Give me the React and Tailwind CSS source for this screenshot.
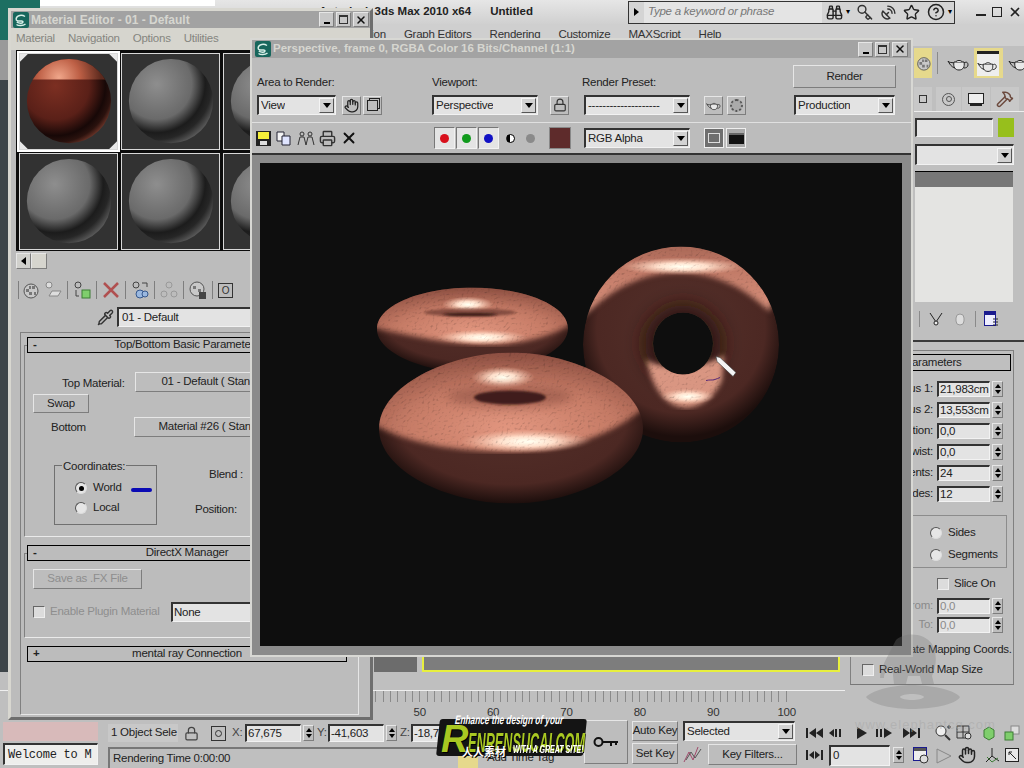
import { Binoculars, CircleHelp, Key, Lock, SatelliteDish, Star, Hand, Hammer, Pipette, Printer, X } from 'lucide-react'

// shared bevel styles
const raised = 'border border-t-[#e6e6e6] border-l-[#e6e6e6] border-b-[#7d7d7d] border-r-[#7d7d7d] bg-[#bdbdbd]'
const sunken = 'border-t-2 border-l-2 border-t-[#333] border-l-[#333] border-b border-r border-b-[#f2f2f2] border-r-[#f2f2f2] bg-[#e3e3e3]'

const ArrowBtn = () => (
  <span className="ml-auto mr-[1px] flex h-[15px] w-[15px] items-center justify-center border border-t-[#f4f4f4] border-l-[#f4f4f4] border-b-[#555] border-r-[#555] bg-[#d2d2d2]">
    <span className="h-0 w-0 border-x-[4px] border-t-[5px] border-x-transparent border-t-black" />
  </span>
)

const Dropdown = ({ label, className }) => (
  <div className={`flex h-[20px] items-center pl-[2px] text-[11.5px] text-[#222] ${sunken} ${className}`}>
    <span className="truncate">{label}</span>
    <ArrowBtn />
  </div>
)

const Spin = () => (
  <div className={`flex h-[16px] w-[11px] flex-col items-center justify-center gap-[2px] ${raised}`}>
    <span className="h-0 w-0 border-x-[3px] border-b-[4px] border-x-transparent border-b-black" />
    <span className="h-0 w-0 border-x-[3px] border-t-[4px] border-x-transparent border-t-black" />
  </div>
)

const SpinRow = ({ label, value, muted }) => (
  <div className="flex h-[16px] items-center">
    <span className={`w-[82px] whitespace-nowrap pr-[4px] text-right text-[11.5px] ${muted ? 'text-[#8a8a8a]' : 'text-[#222]'}`}>{label}</span>
    <span className={`flex h-[16px] w-[53px] items-center pl-[1px] text-[11.5px] ${sunken} ${muted ? 'text-[#8a8a8a]' : 'text-[#222]'}`}>{value}</span>
    <span className="ml-[2px]"><Spin /></span>
  </div>
)

const Radio = ({ on }) => (
  <span className="flex h-[12px] w-[12px] items-center justify-center rounded-full border border-t-[#555] border-l-[#555] border-b-[#ddd] border-r-[#ddd] bg-[#e6e6e6]">
    {on && <span className="h-[5px] w-[5px] rounded-full bg-black" />}
  </span>
)

const Check = () => (
  <span className="h-[12px] w-[12px] border border-t-[#666] border-l-[#666] border-b-[#eee] border-r-[#eee] bg-[#dcdcdc]" />
)

const RolloutHead = ({ sign, title, className = '' }) => (
  <div className={`relative flex h-[16px] items-center justify-center border border-black bg-[#bcbcbc] text-[11.5px] text-[#222] ${className}`}>
    <span className="absolute left-[5px] font-bold">{sign}</span>
    {title}
  </div>
)

const MaxLogo = () => (
  <svg width="16" height="16" viewBox="0 0 16 16">
    <rect width="16" height="16" rx="2" fill="#17665c" />
    <path d="M12 4.5C9 2.5 4 3 3.2 6.5 2.6 9.5 6 9 8.5 9c2 .1 2 2-.5 2.2-1.6.1-3-.3-4.2-1M12.5 12C10 14 5.5 14 3.5 12.5" fill="none" stroke="#d8efe8" strokeWidth="1.5" />
  </svg>
)

const WinButtons = ({ className }) => (
  <div className={`flex gap-[2px] ${className}`}>
    <div className={`flex h-[15px] w-[15px] items-end justify-center pb-[2px] ${raised} bg-[#c8c8c8]`}><span className="h-[2px] w-[6px] bg-black" /></div>
    <div className={`flex h-[15px] w-[15px] items-center justify-center ${raised} bg-[#c8c8c8]`}><span className="h-[9px] w-[9px] border border-t-2 border-[#333]" /></div>
    <div className={`flex h-[15px] w-[16px] items-center justify-center ${raised} bg-[#c8c8c8]`}><X size={12} strokeWidth={3} color="#111" /></div>
  </div>
)

const CheckerBall = ({ size = 18 }) => (
  <svg width={size} height={size} viewBox="0 0 18 18">
    <circle cx="10" cy="10" r="7" fill="#c8c8c8" stroke="#555" />
    <path d="M5 8h3v3H5zM11 5h3v3h-3zM8 11h3v3H8zM13 11h2v3h-2zM8 5h2v3H8z" fill="#777" />
  </svg>
)

const Teapot = ({ size = 24, stroke = '#222' }) => (
  <svg width={size} height={size} viewBox="0 0 24 24" fill="#e8e8e8" stroke={stroke} strokeWidth="1">
    <path d="M7 11h10c1 5-1 8-5 8s-6-3-5-8z" />
    <path d="M7 12c-3-1-5 0-6-2 1 2 3 6 7 7M17 12c3-2 4 0 4 2s-2 3-4 3" fill="none" />
    <path d="M9 11c0-2 6-2 6 0" />
  </svg>
)

const ToolSep = () => <span className="mx-[5px] h-[18px] w-[1px] bg-[#7e7e7e]" />

const Sphere = ({ selected, id }) => {
  if (selected) {
    return (
      <svg viewBox="0 0 99 97" className="block h-full w-full">
        <defs>
          <radialGradient id="redLow" cx="34%" cy="32%" r="80%">
            <stop offset="0" stopColor="#7c2f22" />
            <stop offset=".5" stopColor="#5a2018" />
            <stop offset=".74" stopColor="#170807" />
            <stop offset=".84" stopColor="#2a120e" />
            <stop offset=".97" stopColor="#8a4535" />
          </radialGradient>
          <radialGradient id="redTop" cx="38%" cy="22%" r="50%">
            <stop offset="0" stopColor="#f0a68a" />
            <stop offset=".5" stopColor="#bd5f45" />
            <stop offset="1" stopColor="#5c2a1e" />
          </radialGradient>
          <clipPath id="capClip"><rect x="0" y="0" width="99" height="26" /></clipPath>
        </defs>
        <rect width="99" height="97" fill="#323232" />
        <circle cx="50" cy="48" r="43" fill="url(#redLow)" />
        <circle cx="50" cy="48" r="43" fill="url(#redTop)" clipPath="url(#capClip)" />
        <path d="M0 0h8L0 8zM99 0v8L91 0zM0 97v-8l8 8zM99 97h-8l8-8z" fill="#e8e8e8" />
      </svg>
    )
  }
  return (
    <svg viewBox="0 0 99 97" className="block h-full w-full">
      <defs>
        <radialGradient id={id} cx="33%" cy="30%" r="80%">
          <stop offset="0" stopColor="#8e8e8e" />
          <stop offset=".52" stopColor="#6a6a6a" />
          <stop offset=".72" stopColor="#1c1c1c" />
          <stop offset=".82" stopColor="#262626" />
          <stop offset=".96" stopColor="#5e5e5e" />
        </radialGradient>
      </defs>
      <rect width="99" height="97" fill="#323232" />
      <circle cx="50" cy="48" r="43" fill={`url(#${id})`} />
    </svg>
  )
}

const MaterialEditor = () => (
  <section className="absolute left-[8px] top-[8px] flex h-[712px] w-[365px] flex-col border-[3px] border-[#d8d7d0] border-b-[#6e6e6e] border-r-[#6e6e6e] bg-[#bcbcbc]">
    <div className="flex h-[17px] items-center bg-[#a2a2a2] pl-[2px]">
      <MaxLogo />
      <span className="ml-[2px] text-[12px] font-bold tracking-normal text-[#d6d6d0]">Material Editor - 01 - Default</span>
      <WinButtons className="ml-auto mr-[1px]" />
    </div>
    <div className="flex h-[22px] items-center gap-[13px] bg-[#d6d5ce] pl-[5px] text-[11.5px] text-[#85857f]">
      <span>Material</span><span>Navigation</span><span>Options</span><span>Utilities</span>
    </div>
    <div className="ml-[5px] grid h-[201px] w-[340px] grid-cols-[99px_99px_99px] gap-[3px] bg-[#0c0c0c] p-[3px]">
      <div className="border border-[#d8d8d8] outline-2 outline-white"><Sphere selected /></div>
      <div className="border border-[#d8d8d8]"><Sphere id="s2" /></div>
      <div className="border border-[#d8d8d8]"><Sphere id="s3" /></div>
      <div className="border border-[#d8d8d8]"><Sphere id="s4" /></div>
      <div className="border border-[#d8d8d8]"><Sphere id="s5" /></div>
      <div className="border border-[#d8d8d8]"><Sphere id="s6" /></div>
    </div>
    <div className="ml-[5px] mt-[2px] flex h-[16px]">
      <div className={`flex w-[15px] items-center justify-center ${raised} bg-[#d0d0cc]`}><span className="h-0 w-0 border-y-[4px] border-r-[5px] border-y-transparent border-r-black" /></div>
      <div className={`w-[16px] ${raised} bg-[#d6d5ce]`} />
    </div>
    <div className="ml-[7px] mt-[11px] flex h-[20px] items-center">
      <span className="mr-[2px] h-[18px] w-[1px] bg-[#7e7e7e]" />
      <CheckerBall />
      <svg width="18" height="18" viewBox="0 0 18 18" className="ml-[5px]" fill="#ddd" stroke="#888"><circle cx="5" cy="4" r="3" /><path d="M5 15l3-5h9l-3 5z" /></svg>
      <ToolSep />
      <svg width="18" height="18" viewBox="0 0 18 18" stroke="#444" fill="none"><circle cx="5" cy="4" r="3" /><path d="M3 9v6h3" /><rect x="9" y="9" width="8" height="8" fill="#7fce6c" stroke="#3d7d35" /></svg>
      <ToolSep />
      <svg width="18" height="18" viewBox="0 0 18 18" stroke="#b05050" strokeWidth="2.5"><path d="M2 2l14 14M16 2L2 16" /></svg>
      <ToolSep />
      <svg width="18" height="18" viewBox="0 0 18 18" stroke="#444" fill="none"><circle cx="5" cy="4" r="3" /><path d="M11 2h5v4" /><circle cx="9" cy="13" r="4" fill="#9ab8e0" stroke="#35588d" /><circle cx="14" cy="13" r="3" fill="#9ab8e0" stroke="#35588d" /></svg>
      <ToolSep />
      <svg width="18" height="18" viewBox="0 0 18 18" stroke="#999" fill="none"><circle cx="9" cy="4" r="3" /><circle cx="4" cy="13" r="3" /><circle cx="14" cy="13" r="3" /></svg>
      <ToolSep />
      <svg width="18" height="18" viewBox="0 0 18 18"><circle cx="8" cy="8" r="7" fill="#c8c8c8" stroke="#555" /><path d="M4 5h3v3H4zM9 8h3v3H9z" fill="#777" /><rect x="10" y="11" width="7" height="7" fill="#444" /></svg>
      <ToolSep />
      <span className="flex h-[15px] w-[15px] items-center justify-center border border-[#333] text-[10px] text-[#333]">O</span>
    </div>
    <div className="mt-[7px] flex h-[20px] items-center">
      <Pipette size={17} color="#333" className="ml-[86px]" />
      <div className={`ml-[3px] flex h-[20px] w-[200px] items-center pl-[3px] text-[11.5px] text-[#222] ${sunken}`}>01 - Default</div>
    </div>
    {/* material parameter rollouts */}
    <div className="relative ml-[9px] mt-[5px] h-[383px] w-[339px] border border-[#808080] border-b-[#e6e6e6] border-r-[#e6e6e6] pl-[3px]">
      <div className="relative mt-[4px] h-[200px] w-[324px]">
        <div className="absolute bottom-0 left-0 top-[8px] w-full border border-[#808080] border-b-[#eaeaea]" />
        <RolloutHead sign="-" title="Top/Bottom Basic Parameters" className="relative ml-[3px] w-[320px]" />
        <div className="relative mt-[20px] flex h-[18px] items-center text-[11.5px] text-[#222]">
          <span className="ml-[38px] mt-[3px] w-[73px]">Top Material:</span>
          <div className={`w-[170px] text-center ${raised}`}>01 - Default  ( Standard )</div>
        </div>
        <div className={`relative ml-[9px] mt-[3px] flex h-[19px] w-[56px] items-center justify-center text-[11.5px] text-[#222] ${raised}`}>Swap</div>
        <div className="relative mt-[5px] flex h-[18px] items-center text-[11.5px] text-[#222]">
          <span className="ml-[27px] mt-[2px] w-[83px]">Bottom</span>
          <div className={`w-[170px] text-center ${raised}`}>Material #26  ( Standard )</div>
        </div>
        <div className="relative mt-[24px] flex text-[11.5px] text-[#222]">
          <div className="relative ml-[30px] mt-[5px] h-[60px] w-[103px] border border-[#707070] pl-[20px] pt-[12px]">
            <span className="absolute left-[7px] top-[-8px] bg-[#bcbcbc] px-[1px]">Coordinates:</span>
            <div className="flex h-[20px] items-center gap-[6px]"><Radio on /><span>World</span><span className="ml-[3px] mt-[4px] h-[4px] w-[21px] rounded-full bg-[#0a0ab4]" /></div>
            <div className="flex h-[20px] items-center gap-[6px]"><Radio /><span>Local</span></div>
          </div>
          <div className="ml-[38px] flex flex-col">
            <span className="ml-[14px] mt-[6px]">Blend :</span>
            <span className="mt-[18px]">Position:</span>
          </div>
        </div>
      </div>
      <div className="relative mt-[8px] h-[93px] w-[324px]">
        <div className="absolute bottom-0 left-0 top-[8px] w-full border border-[#808080] border-b-[#eaeaea]" />
        <RolloutHead sign="-" title="DirectX Manager" className="relative ml-[3px] w-[320px]" />
        <div className={`relative ml-[9px] mt-[8px] flex h-[20px] w-[109px] items-center justify-center text-[11.5px] text-[#8e8e8e] ${raised}`}>Save as .FX File</div>
        <div className="relative mt-[13px] flex h-[20px] items-center text-[11.5px] text-[#8e8e8e]">
          <span className="ml-[9px] flex"><Check /></span>
          <span className="ml-[5px] w-[121px]">Enable Plugin Material</span>
          <span className={`flex h-[20px] w-[120px] items-center pl-[1px] text-[#222] ${sunken}`}>None</span>
        </div>
      </div>
      <div className="relative mt-[8px] h-[16px] w-[324px]">
        <RolloutHead sign="+" title="mental ray Connection" className="ml-[3px] w-[320px]" />
      </div>
    </div>
  </section>
)

// bump-mapped doughnuts of the rendered frame, in screen coordinates
const Doughnuts = () => (
  <svg viewBox="260 163 642 482" className="block h-full w-full">
    <defs>
      <filter id="bump" x="0" y="0" width="100%" height="100%" colorInterpolationFilters="sRGB">
        <feTurbulence type="fractalNoise" baseFrequency="0.38" numOctaves="2" seed="4" result="n" />
        <feDiffuseLighting in="n" surfaceScale="0.7" diffuseConstant="1.14" lightingColor="#fff" result="l0">
          <feDistantLight azimuth="235" elevation="64" />
        </feDiffuseLighting>
        <feGaussianBlur in="l0" stdDeviation="0.5" result="l" />
        <feComposite in="SourceGraphic" in2="l" operator="arithmetic" k1="1.05" k2="0" k3="0" k4="0" result="m" />
        <feComposite in="m" in2="SourceAlpha" operator="in" />
      </filter>
      <filter id="b2" x="-20%" y="-20%" width="140%" height="140%"><feGaussianBlur stdDeviation="3" /></filter>
      <filter id="b1" x="-20%" y="-100%" width="140%" height="300%"><feGaussianBlur stdDeviation="1.2" /></filter>
      <filter id="b4" x="-50%" y="-100%" width="200%" height="300%"><feGaussianBlur stdDeviation="5" /></filter>
      <filter id="b8" x="-60%" y="-60%" width="220%" height="220%"><feGaussianBlur stdDeviation="10" /></filter>
      <radialGradient id="dark" cx="50%" cy="42%" r="55%">
        <stop offset="0" stopColor="#54302a" />
        <stop offset=".78" stopColor="#4c2823" />
        <stop offset="1" stopColor="#1c0e0c" />
      </radialGradient>
      <radialGradient id="litA" cx="50%" cy="78%" r="68%">
        <stop offset="0" stopColor="#d8907a" />
        <stop offset=".55" stopColor="#bc7561" />
        <stop offset="1" stopColor="#83493c" />
      </radialGradient>
      <linearGradient id="litC" x1="0" y1="1" x2="0" y2="0">
        <stop offset="0" stopColor="#d4917c" />
        <stop offset=".5" stopColor="#ba7664" />
        <stop offset="1" stopColor="#8c5345" />
      </linearGradient>
      <radialGradient id="spec">
        <stop offset="0" stopColor="#fff8ea" />
        <stop offset=".4" stopColor="#fae0cd" stopOpacity=".9" />
        <stop offset="1" stopColor="#eeb9a2" stopOpacity="0" />
      </radialGradient>
      <clipPath id="bodyA"><path d="M377 328C378 303 425 287 472 287S568 303 568 328C568 352 520 372 472 372S376 352 377 328Z" /></clipPath>
      <clipPath id="bodyB"><path d="M379 428C379 385 450 352 511 352S643 385 643 428C643 470 575 503 511 503S379 470 379 428Z" /></clipPath>
      <clipPath id="bodyC"><path fillRule="evenodd" clipRule="evenodd" d="M583 344a98 98 0 1 0 196 0a98 98 0 1 0 -196 0ZM653 343a30 31 0 1 1 60 0a30 31 0 1 1 -60 0Z" /></clipPath>
    </defs>

    {/* right doughnut */}
    <g clipPath="url(#bodyC)">
      <circle cx="681" cy="344" r="98" fill="url(#dark)" />
      <circle cx="683" cy="343" r="38" fill="#2b1411" filter="url(#b8)" />
      <g filter="url(#bump)">
        <g filter="url(#b2)">
          <path d="M575 325L593 310C620 285 650 274 677 274C710 274 740 285 770 314L795 240L575 220Z" fill="url(#litC)" />
          <path d="M644 356C660 368 700 368 726 352L724 380C714 402 698 409 685 409C665 408 650 390 644 356Z" fill="#cf8f7b" />
        </g>
        <ellipse cx="682" cy="266" rx="62" ry="9" fill="url(#spec)" />
        <ellipse cx="688" cy="396" rx="28" ry="8" fill="url(#spec)" />
      </g>
    </g>

    {/* back left doughnut */}
    <g clipPath="url(#bodyA)">
      <rect x="370" y="280" width="205" height="95" fill="url(#dark)" />
      <g filter="url(#bump)">
        <path filter="url(#b2)" d="M370 328C410 338 450 346 493 346C525 345 550 338 575 324V280H370Z" fill="url(#litA)" />
        <ellipse cx="468" cy="304" rx="26" ry="8" fill="url(#spec)" />
        <ellipse cx="482" cy="337" rx="46" ry="8" fill="url(#spec)" />
      </g>
      <ellipse cx="470" cy="312" rx="46" ry="4" fill="#6a3a30" opacity=".7" filter="url(#b1)" />
      <ellipse cx="470" cy="314" rx="28" ry="1.6" fill="#3a1c18" filter="url(#b1)" />
    </g>

    {/* front doughnut */}
    <g clipPath="url(#bodyB)">
      <rect x="375" y="348" width="272" height="160" fill="url(#dark)" />
      <g filter="url(#bump)">
        <path filter="url(#b2)" d="M370 424C405 444 450 453 510 453C560 453 610 440 650 405V340H370Z" fill="url(#litA)" />
        <ellipse cx="503" cy="377" rx="32" ry="11" fill="url(#spec)" />
        <ellipse cx="527" cy="441" rx="66" ry="12" fill="url(#spec)" />
      </g>
      <ellipse cx="510" cy="396" rx="62" ry="11" fill="#8a5042" opacity=".55" filter="url(#b4)" />
      <ellipse cx="510" cy="397" rx="36" ry="7" fill="#3f1f1b" filter="url(#b1)" />
    </g>

    {/* pen cursor and scribble */}
    <path d="M706 380c4-1 6 0 9-1 2-1 3-1 5-2" fill="none" stroke="#5a2a78" />
    <path d="M716 356l4 1 16 15-3 4-16-15z" fill="#f4f4f4" stroke="#333" strokeWidth=".6" />
  </svg>
)

const RenderWindow = () => (
  <section className="absolute left-[250px] top-[38px] flex h-[619px] w-[663px] flex-col border-2 border-[#d8d8d4] bg-[#bcbcbc]">
    <div className="flex h-[18px] items-center bg-[#a3a3a3] pl-[3px]">
      <MaxLogo />
      <span className="ml-[2px] text-[11.5px] font-bold tracking-normal text-[#d6d6d0]">Perspective, frame 0, RGBA Color 16 Bits/Channel (1:1)</span>
      <WinButtons className="ml-auto mr-[3px]" />
    </div>
    <div className="flex h-[65px] border-b border-[#e0e0e0] pl-[5px] text-[11.5px] text-[#222]">
      <div className="w-[175px] pt-[16px]">
        <div className="h-[21px]">Area to Render:</div>
        <div className="flex items-center">
          <Dropdown label="View" className="w-[79px]" />
          <span className={`ml-[6px] flex h-[19px] w-[19px] items-center justify-center ${raised}`}><Hand size={15} color="#222" /></span>
          <span className={`ml-[2px] flex h-[19px] w-[19px] items-center justify-center ${raised}`}><span className="h-[11px] w-[11px] border border-[#222] shadow-[2px_-2px_0_-1px_#bdbdbd,2px_-2px_0_0_#222]" /></span>
        </div>
      </div>
      <div className="w-[150px] pt-[16px]">
        <div className="h-[21px]">Viewport:</div>
        <div className="flex items-center">
          <Dropdown label="Perspective" className="w-[106px]" />
          <span className={`ml-[12px] flex h-[19px] w-[19px] items-center justify-center ${raised}`}><Lock size={14} color="#333" /></span>
        </div>
      </div>
      <div className="w-[211px] pt-[16px]">
        <div className="h-[21px]">Render Preset:</div>
        <div className="flex items-center">
          <Dropdown label="--------------------" className="ml-[2px] w-[106px]" />
          <span className={`ml-[14px] flex h-[19px] w-[19px] items-center justify-center ${raised}`}><Teapot size={16} /></span>
          <span className={`ml-[4px] flex h-[19px] w-[19px] items-center justify-center ${raised}`}><span className="h-[13px] w-[13px] rounded-full border-2 border-dotted border-[#555] bg-[#aaa]" /></span>
        </div>
      </div>
      <div className="w-[104px] pt-[7px]">
        <div className={`flex h-[23px] w-[103px] items-center justify-center ${raised}`}>Render</div>
        <Dropdown label="Production" className="ml-[1px] mt-[7px] w-[101px]" />
      </div>
    </div>
    <div className="flex h-[32px] items-center border-b-2 border-[#333] pl-[4px]">
      <svg width="15" height="15" viewBox="0 0 15 15"><rect width="15" height="15" fill="#222" /><rect x="2" y="1" width="11" height="7" fill="#f4ee3a" /><rect x="4" y="10" width="7" height="4" fill="#ddd" /></svg>
      <svg width="16" height="15" viewBox="0 0 16 15" className="ml-[5px]" fill="#f4f4f4" stroke="#223"><path d="M1 1h7v9H1z" /><path d="M6 5h8v9H6z" fill="#dfe4ff" /></svg>
      <svg width="18" height="15" viewBox="0 0 18 15" className="ml-[5px]" fill="none" stroke="#333"><circle cx="5" cy="3" r="2" /><circle cx="13" cy="3" r="2" /><path d="M1 14l2-8h4l2 8M9 14l2-8h4l2 8" /></svg>
      <Printer size={17} color="#333" className="ml-[4px]" />
      <X size={18} strokeWidth={2.5} color="#111" className="ml-[4px]" />
      <div className="ml-[76px] flex gap-[1px]">
        {['#d8101c', '#109a1c', '#1010c4'].map(c => (
          <div key={c} className="flex h-[22px] w-[21px] items-center justify-center border border-t-[#777] border-l-[#777] border-b-[#f2f2f2] border-r-[#f2f2f2] bg-[#e4e4e4]">
            <span className="h-[9px] w-[9px] rounded-full" style={{ backgroundColor: c }} />
          </div>
        ))}
      </div>
      <span className="ml-[7px] h-[9px] w-[9px] rounded-full border border-black bg-[linear-gradient(90deg,#000_50%,#fff_50%)]" />
      <span className="ml-[11px] h-[9px] w-[9px] rounded-full bg-[#8a8a8a]" />
      <span className="ml-[14px] h-[22px] w-[22px] border border-[#888] bg-[#5e2b2b]" />
      <Dropdown label="RGB Alpha" className="ml-[13px] w-[106px]" />
      <span className="ml-[14px] flex h-[20px] w-[20px] items-center justify-center border border-[#eee] bg-[#6e6e6e]"><span className="h-[10px] w-[12px] border border-[#ddd]" /></span>
      <span className="ml-[2px] flex h-[20px] w-[20px] items-center justify-center border border-[#eee] bg-[#aaa]"><span className="h-[11px] w-[15px] border-t-2 border-[#666] bg-[#111]" /></span>
    </div>
    <div className="min-h-0 flex-1 bg-[#8b8b8b] pb-[9px] pl-[8px] pr-[9px] pt-[8px]">
      <div className="h-full w-full bg-[#0e0e0e]"><Doughnuts /></div>
    </div>
  </section>
)

const CommandPanel = () => (
  <aside className="w-[179px] shrink-0 bg-[#bfbfbf] text-[11.5px] text-[#222]">
    <div className="ml-[69px] flex h-[34px] items-center">
      <span className="flex h-[30px] w-[18px] items-center justify-center bg-[#e6d98c]"><CheckerBall size={16} /></span>
      <span className="mx-[5px] h-[22px] w-[1px] bg-[#8a8a8a]" />
      <span className="ml-[4px]"><Teapot size={24} /></span>
      <span className="ml-[3px] flex h-[30px] w-[30px] items-center justify-center bg-[#e6d98c]"><span className="border-t-[3px] border-[#222] bg-[#eee]"><Teapot size={22} /></span></span>
      <span className="ml-[5px] w-[16px] overflow-hidden"><Teapot size={24} /></span>
    </div>
    <div className="ml-[69px] mt-[7px] flex h-[25px] items-center gap-[1px] border-b border-[#eee]">
      <span className="flex h-[24px] w-[18px] items-center justify-center bg-[#c8c8c8]"><span className="h-[8px] w-[8px] border border-[#333]" /></span>
      <span className="ml-[3px] flex h-[24px] w-[25px] items-center justify-center bg-[#c8c8c8]"><span className="flex h-[13px] w-[13px] items-center justify-center rounded-full border border-[#555]"><span className="h-[6px] w-[6px] rounded-full border border-[#555]" /></span></span>
      <span className="flex h-[24px] w-[28px] flex-col items-center justify-center bg-[#c8c8c8]"><span className="h-[11px] w-[16px] border border-[#222] bg-[#eee]" /><span className="h-[2px] w-[12px] bg-[#222]" /></span>
      <span className="flex h-[24px] w-[28px] items-center justify-center bg-[#c8c8c8]"><Hammer size={18} color="#6c4a3e" /></span>
    </div>
    <div className="ml-[70px] mt-[6px] flex">
      <span className={`h-[19px] w-[78px] ${sunken}`} />
      <span className="ml-[5px] h-[19px] w-[16px] bg-[#97bf1c]" />
    </div>
    <Dropdown label="" className="ml-[70px] mt-[7px] h-[21px] w-[99px]" />
    <div className="ml-[70px] mt-[6px] h-[131px] w-[98px] bg-[#e4e4e2]"><div className="h-[16px] border-t border-black bg-[#777]" /></div>
    <div className="ml-[74px] mt-[8px] flex h-[18px] items-center">
      <span className="h-[16px] w-[1px] bg-[#8a8a8a]" />
      <svg width="16" height="16" viewBox="0 0 16 16" className="ml-[9px]" fill="none" stroke="#222"><path d="M1 2l6 9 6-9" /><circle cx="7" cy="12" r="2" fill="#eee" /></svg>
      <svg width="12" height="16" viewBox="0 0 12 16" className="ml-[9px]" fill="#ddd" stroke="#999"><rect x="2" y="3" width="8" height="11" rx="4" /></svg>
      <span className="ml-[9px] h-[16px] w-[1px] bg-[#8a8a8a]" />
      <svg width="16" height="16" viewBox="0 0 16 16" className="ml-[8px]"><rect x=".5" y=".5" width="11" height="14" fill="#eef" stroke="#1a1a8e" /><rect x="1" y="1" width="11" height="3" fill="#1a1a8e" /><path d="M9 8h6M9 11h6M9 14h6" stroke="#222" strokeDasharray="2 1" /></svg>
    </div>
    <div className="mt-[12px] h-[2px] w-full bg-[#3a3a3a]" />
    <div className="ml-[5px] mt-[8px] h-[335px] w-[164px] border border-[#808080] border-b-[#777] pl-[4px]">
      <div className="relative mt-[3px] flex h-[17px] w-[156px] items-center justify-center border border-black">Parameters</div>
      <div className="mt-[10px] flex flex-col gap-[5px]">
        <SpinRow label="Radius 1:" value="21,983cm" />
        <SpinRow label="Radius 2:" value="13,553cm" />
        <SpinRow label="Rotation:" value="0,0" />
        <SpinRow label="Twist:" value="0,0" />
        <SpinRow label="Segments:" value="24" />
        <SpinRow label="Sides:" value="12" />
      </div>
      <div className="ml-[2px] mt-[13px] h-[53px] w-[150px] border border-[#8c8c8c] pl-[72px] pt-[10px]">
        <div className="flex h-[14px] items-center gap-[6px]"><Radio /><span>Sides</span></div>
        <div className="mt-[8px] flex h-[14px] items-center gap-[6px]"><Radio /><span>Segments</span></div>
      </div>
      <div className="ml-[82px] mt-[9px] flex h-[14px] items-center gap-[5px]"><Check /><span>Slice On</span></div>
      <div className="mt-[7px] flex flex-col gap-[3px]">
        <SpinRow label="Slice From:" value="0,0" muted />
        <SpinRow label="To:" value="0,0" muted />
      </div>
    </div>
  </aside>
)

const MappingChecks = () => (
  <div className="absolute left-[862px] top-[642px] text-[11.5px] text-[#222]">
    <div className="flex h-[16px] items-center gap-[5px]"><Check /><span>Generate Mapping Coords.</span></div>
    <div className="mt-[4px] flex h-[16px] items-center gap-[5px]"><Check /><span>Real-World Map Size</span></div>
  </div>
)

const Transport = ({ d, className = '' }) => (
  <svg width="18" height="14" viewBox="0 0 18 14" className={className} fill="#222"><path d={d} /></svg>
)

const StatusBar = () => (
  <footer className="flex h-[48px] bg-[#bfbfbf] text-[11.5px] text-[#222]">
    <div className="w-[105px] shrink-0 pl-[3px] pt-[2px]">
      <div className="h-[19px] w-[95px] bg-[#d8baba]" />
      <div className={`mt-[2px] flex h-[22px] w-[95px] items-center whitespace-nowrap pl-[3px] font-['Liberation_Mono',monospace] text-[12px] ${sunken} bg-[#eeeeec]`}>Welcome to M</div>
    </div>
    <div className="w-[479px] shrink-0 pt-[4px]">
      <div className="flex h-[18px] items-center">
        <span className="ml-[3px] flex h-[18px] w-[70px] items-center whitespace-nowrap bg-[#c8c8c8] pl-[3px]">1 Object Sele</span>
        <Lock size={15} color="#444" className="ml-[6px]" />
        <span className="ml-[12px] flex h-[15px] w-[15px] items-center justify-center border border-[#333]"><span className="h-[7px] w-[7px] rounded-full border border-[#333]" /></span>
        <span className="ml-[6px] w-[13px] text-[#444]">X:</span>
        <span className={`flex h-[18px] w-[56px] items-center pl-[1px] ${sunken}`}>67,675</span>
        <span className="ml-[2px]"><Spin /></span>
        <span className="ml-[3px] w-[11px] text-[#444]">Y:</span>
        <span className={`flex h-[18px] w-[56px] items-center pl-[1px] ${sunken}`}>-41,603</span>
        <span className="ml-[2px]"><Spin /></span>
        <span className="ml-[3px] w-[11px] text-[#444]">Z:</span>
        <span className={`flex h-[18px] w-[56px] items-center pl-[1px] ${sunken}`}>-18,72</span>
      </div>
      <div className="mt-[5px] flex h-[21px] items-center">
        <span className="ml-[3px] flex h-[21px] w-[350px] items-center border-l-2 border-t-2 border-[#777] pl-[3px]">Rendering Time  0:00:00</span>
        <span className="h-[21px] w-[20px] bg-[#e6d98c]" />
        <span className="ml-[9px]">Add Time Tag</span>
      </div>
    </div>
    <div className={`flex h-[44px] w-[44px] shrink-0 items-center justify-center ${raised}`}>
      <svg width="26" height="12" viewBox="0 0 26 12" fill="none" stroke="#111" strokeWidth="2"><circle cx="5.5" cy="6" r="4" /><path d="M10 6h15M18 6v4M23 6v3" /></svg>
    </div>
    <div className="ml-[4px] flex w-[46px] shrink-0 flex-col gap-[2px] pt-[1px]">
      <div className={`flex h-[20px] items-center justify-center whitespace-nowrap ${raised}`}>Auto Key</div>
      <div className={`flex h-[21px] items-center justify-center whitespace-nowrap ${raised}`}>Set Key</div>
    </div>
    <div className="ml-[5px] flex w-[114px] shrink-0 flex-col gap-[3px] pt-[1px]">
      <Dropdown label="Selected" className="w-[112px]" />
      <div className="flex h-[21px] items-center">
        <svg width="20" height="18" viewBox="0 0 20 18" fill="none" stroke="#a04a6a"><path d="M1 16l5-10 4 8 5-13" /><path d="M3 14l5-8 4 6 6-9" stroke="#555" /></svg>
        <div className={`ml-[5px] flex h-[21px] w-[89px] items-center justify-center ${raised}`}>Key Filters...</div>
      </div>
    </div>
    <div className="ml-[9px] flex-1">
      <div className="flex h-[24px] items-center pt-[1px]">
        <Transport d="M0 2h2v10H0zM3 7l7-5v10zM10 7l7-5v10z" />
        <Transport d="M0 7l5-4v8zM6 3h2v8H6zM10 3h2v8h-2z" className="ml-[5px]" />
        <Transport d="M4 1l10 6-10 6z" className="ml-[6px]" />
        <Transport d="M0 3h2v8H0zM4 3h2v8H4zM8 2l8 5-8 5z" className="ml-[5px]" />
        <Transport d="M0 2l7 5-7 5zM7 2l7 5-7 5zM15 2h2v10h-2z" className="ml-[9px]" />
        <span className="ml-[13px] flex"><svg width="18" height="16" viewBox="0 0 18 16" fill="#eee" stroke="#333"><circle cx="7" cy="6" r="5" /><path d="M11 10l5 5" strokeWidth="2" /><path d="M13 2h4M15 0v4" /></svg></span>
        <span className="ml-[4px] flex"><svg width="18" height="16" viewBox="0 0 18 16" fill="none" stroke="#333"><path d="M1 1h12v12H1zM1 7h12M7 1v12" /><circle cx="12" cy="11" r="3" fill="#ddd" /></svg></span>
        <span className="ml-[7px] flex"><svg width="16" height="16" viewBox="0 0 16 16"><path d="M3 5l5-3 5 3v7l-5 3-5-3z" fill="#7fce6c" stroke="#3d7d35" /></svg></span>
        <span className="ml-[6px] flex"><svg width="18" height="16" viewBox="0 0 18 16"><rect x="8" y="1" width="8" height="8" fill="#ddd" stroke="#888" /><rect x="2" y="7" width="8" height="8" fill="#7fce6c" stroke="#3d7d35" /></svg></span>
      </div>
      <div className="flex h-[22px] items-center">
        <Transport d="M0 2h2v10H0zM3 7l5-4v8zM14 7l-5-4v8zM15 2h2v10h-2z" />
        <span className={`ml-[5px] flex h-[21px] w-[61px] items-center pl-[2px] ${sunken}`}>0</span>
        <span className="ml-[3px]"><Spin /></span>
        <span className="ml-[9px] flex"><svg width="17" height="17" viewBox="0 0 17 17"><rect x=".5" y=".5" width="13" height="13" fill="#eee" stroke="#1a1a8e" /><rect x="1" y="1" width="12" height="3" fill="#555" /><circle cx="11" cy="12" r="4" fill="#ddd" stroke="#333" /></svg></span>
        <span className="ml-[6px] flex"><svg width="16" height="17" viewBox="0 0 16 17" fill="none" stroke="#888"><path d="M1 2l14 7-14 7z" /></svg></span>
        <Hand size={18} color="#222" className="ml-[6px]" />
        <span className="ml-[8px] flex"><svg width="17" height="17" viewBox="0 0 17 17" fill="none" stroke="#222"><path d="M8 9V1M8 9l-6 6M8 9l7 5" /><path d="M3 10l5 5 6-4" stroke="#3d7d35" /></svg></span>
        <span className="ml-[4px] flex"><svg width="15" height="15" viewBox="0 0 15 15" fill="none" stroke="#222"><rect x=".5" y=".5" width="13" height="13" fill="#e8e8e8" /><path d="M4 4l7 7M4 4h3M4 4v3" /></svg></span>
      </div>
    </div>
  </footer>
)

// frame ruler under the viewports, 100 frames from screen x 53 to 787
const frameLabels = [0, 10, 20, 30, 40, 50, 60, 70, 80, 90, 100]
const ticks = Array.from({ length: 101 }, (_, i) => i)

const Timeline = () => (
  <div className="h-[48px] bg-[#bfbfbf] pt-[18px] text-[11.5px] text-[#333]">
    <div className="flex h-[12px] border-t border-[#efefef]">
      <div className="ml-[53px] flex">
        {ticks.map(t => <span key={t} className="h-[11px] w-[7.34px] shrink-0 border-l border-[#8a8a8a]" />)}
      </div>
    </div>
    <div className="ml-[16px] mt-[2px] flex">
      {frameLabels.map(f => <span key={f} className="w-[73.4px] shrink-0 text-center">{f}</span>)}
    </div>
  </div>
)

const Watermark = () => (
  <>
    <div className="absolute left-[438px] top-[719px] h-[37px] w-[147px] -skew-x-6 rounded-[3px] bg-[#141414]" />
    <div className="absolute left-[455px] top-[711px] origin-left -skew-x-6 scale-x-[.66] whitespace-nowrap font-['Liberation_Sans',sans-serif] text-[12.5px] font-bold italic tracking-normal text-white">Enhance the design of your</div>
    <div className="absolute left-[441px] top-[720px] flex items-baseline whitespace-nowrap font-['Liberation_Sans',sans-serif] font-bold italic tracking-normal text-[#a9c822] [text-shadow:1px_1px_0_#000]">
      <span className="text-[38px] leading-[38px]">R</span>
      <span className="w-[118px] origin-left scale-x-[.47] text-[27px] leading-[27px]">ENRENSUCAI.COM</span>
    </div>
    <div className="absolute left-[462px] top-[743px] flex items-center whitespace-nowrap text-white">
      <span className="font-['Noto_Sans_CJK_SC',sans-serif] text-[11px] font-bold tracking-normal [text-shadow:1px_1px_0_#000]">人人素材</span>
      <span className="ml-[7px] mt-[-5px] origin-left scale-x-[.64] text-[11px] font-bold italic tracking-normal">WITH A GREAT SITE!</span>
    </div>
    {/* elephant mark over the lower right corner */}
    <svg width="110" height="80" viewBox="0 0 110 80" className="pointer-events-none absolute left-[860px] top-[632px] opacity-30">
      <path d="M36 8c8-8 28-8 36 4 6 10 4 24 0 32l2 8H62l-2-8-12 0-2 8H34l-2-18c-6 2-8 8-8 12h-4c0-10 8-22 16-38z" fill="#777" />
      <path fillRule="evenodd" d="M6 65c8-8 30-12 46-12s42 4 48 12c-4 8-30 12-48 12S12 73 6 65ZM40 65c2 4 22 4 24 0-2-4-22-4-24 0Z" fill="#777" />
    </svg>
    <div className="pointer-events-none absolute left-[855px] top-[715px] text-[13px] tracking-[1px] text-[#aaaaaa]/60">www.elephantcg.com</div>
  </>
)

const App = () => (
  <div className="relative h-[768px] w-[1024px] overflow-hidden bg-[#bfbfbf] font-['Liberation_Sans',Arial,sans-serif] text-[11.5px] tracking-[-0.25px]">
    {/* main window chrome */}
    <div className="relative flex h-[24px] items-center bg-[linear-gradient(#e6e6e6,#d0d0d0)]">
      <div className="absolute left-0 top-0 h-[40px] w-[40px] bg-[#1d6f62]" />
      <span className="absolute left-[40px] top-0 h-[6px] w-[175px] bg-white" />
      <div className="flex w-[628px] shrink-0 pl-[319px] text-[11.5px] font-bold tracking-normal text-[#222]">
        <span className="whitespace-nowrap">Autodesk 3ds Max  2010 x64</span>
        <span className="ml-[19px]">Untitled</span>
      </div>
      <div className="flex h-[23px] w-[327px] items-center border border-[#333] bg-[#d4d4d4]">
        <span className="ml-[5px] h-0 w-0 border-y-[4px] border-l-[5px] border-y-transparent border-l-black" />
        <span className="ml-[5px] flex h-full w-[178px] items-center bg-[#e4e4e4] pl-[4px] text-[11.5px] italic text-[#777]">Type a keyword or phrase</span>
        <Binoculars size={17} color="#222" className="ml-[4px]" />
        <span className="ml-[3px] text-[8px]">▾</span>
        <Key size={17} color="#333" className="ml-[6px] rotate-90" />
        <SatelliteDish size={17} color="#333" className="ml-[7px]" />
        <Star size={17} color="#222" className="ml-[6px]" />
        <CircleHelp size={18} color="#222" className="ml-[7px]" />
        <span className="ml-[3px] text-[8px]">▾</span>
      </div>
      <span className="ml-[21px] h-[2px] w-[10px] translate-y-[3px] bg-[#222]" />
      <span className="ml-[6px] h-[10px] w-[10px] border border-[#222]" />
      <X size={14} strokeWidth={3} color="#222" className="ml-[6px]" />
    </div>
    <div className="flex h-[22px] items-center gap-[18px] bg-[#cfcfcf] pl-[337px] text-[11.5px] text-[#333]">
      <span>Animation</span><span>Graph Editors</span><span>Rendering</span><span>Customize</span><span>MAXScript</span><span>Help</span>
    </div>
    <div className="flex h-[674px]">
      <div className="flex w-[845px] flex-col">
        <div className="flex h-[626px] items-end bg-[linear-gradient(90deg,#3e4549_372px,#bfbfbf_372px)] pl-[374px]">
          <div className="h-[15px] w-[43px] bg-[#6c6c6c]" />
          <div className="ml-[5px] h-[15px] w-[418px] border-x-2 border-b-2 border-[#e8f03e] bg-[#7d7d7d]" />
        </div>
        <Timeline />
      </div>
      <CommandPanel />
    </div>
    <StatusBar />
    <div className="absolute left-0 top-[40px] h-[40px] w-[8px] bg-[#9a9a9a]" />

    {/* floating windows */}
    <MaterialEditor />
    <MappingChecks />
    <RenderWindow />
    <Watermark />
  </div>
)

export default App
